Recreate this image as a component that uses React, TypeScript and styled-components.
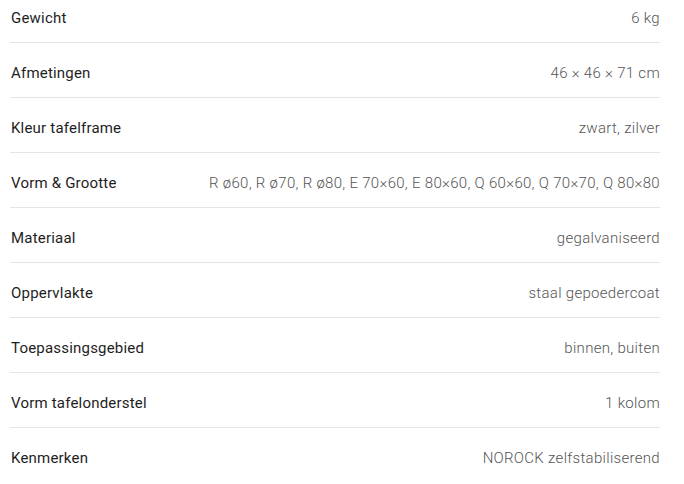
import React from 'react';
import styled, { createGlobalStyle } from 'styled-components';

const GlobalStyle = createGlobalStyle`
  html, body {
    margin: 0;
    padding: 0;
    background: #ffffff;
  }
  body {
    font-family: Roboto, "Liberation Sans", sans-serif;
  }
`;

const SpecList = styled.dl`
  width: 650px;
  margin: 0 0 0 10px;
  padding: 0;
`;

const SpecRow = styled.div`
  display: flex;
  align-items: center;
  justify-content: space-between;
  padding: 20px 0 14px;
  border-bottom: 1px solid #e4e4e4;
  line-height: 20px;

  &:first-child {
    padding-top: 8px;
  }

  &:last-child {
    border-bottom: none;
  }
`;

const Label = styled.dt`
  margin: 0 0 0 1px;
  font-size: 15px;
  letter-spacing: 0.2px;
  color: #1e1e1e;
`;

const Value = styled.dd`
  margin: 0;
  font-size: 15px;
  font-weight: 300;
  letter-spacing: 0.3px;
  color: #555555;
  text-align: right;
`;

const specs: [string, string][] = [
  ['Gewicht', '6 kg'],
  ['Afmetingen', '46 × 46 × 71 cm'],
  ['Kleur tafelframe', 'zwart, zilver'],
  ['Vorm & Grootte', 'R ø60, R ø70, R ø80, E 70×60, E 80×60, Q 60×60, Q 70×70, Q 80×80'],
  ['Materiaal', 'gegalvaniseerd'],
  ['Oppervlakte', 'staal gepoedercoat'],
  ['Toepassingsgebied', 'binnen, buiten'],
  ['Vorm tafelonderstel', '1 kolom'],
  ['Kenmerken', 'NOROCK zelfstabiliserend'],
];

const App: React.FC = () => {
  return (
    <>
      <GlobalStyle />
      <SpecList>
        {specs.map(([label, value]) => (
          <SpecRow key={label}>
            <Label>{label}</Label>
            <Value>{value}</Value>
          </SpecRow>
        ))}
      </SpecList>
    </>
  );
};

export default App;
